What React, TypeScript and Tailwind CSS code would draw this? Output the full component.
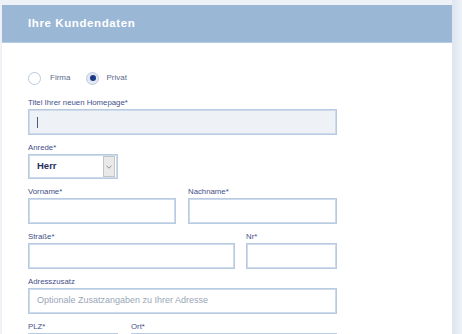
import React from "react";

const font = { fontFamily: '"Liberation Sans", Arial, sans-serif' };

function Label({ children, className = "" }: { children: React.ReactNode; className?: string }) {
  return (
    <div className={"h-[12px] flex items-end pb-[2px] text-[7.8px] leading-[8px] text-[#3f5088] " + className}>
      {children}
    </div>
  );
}

function Input({ className = "", children }: { className?: string; children?: React.ReactNode }) {
  return (
    <div
      className={
        "h-[26px] border-2 border-[#cddaeb] outline outline-1 outline-[#b9cbe1] -outline-offset-1 bg-white flex items-center " +
        className
      }
    >
      {children}
    </div>
  );
}

export default function App() {
  return (
    <div className="w-[462px] h-[334px] overflow-hidden bg-[#eef2f6] flex" style={font}>
      <div className="w-[2px] shrink-0" />
      <div className="w-[450px] shrink-0 mt-[5px] bg-white flex flex-col">
        <div className="h-[38px] shrink-0 bg-[#9bb7d6] border-b border-[#b7cce4] flex items-center pl-[26px]">
          <span className="text-white font-bold text-[11.5px] tracking-[0.6px]">Ihre Kundendaten</span>
        </div>
        <div className="pl-[26px] pt-[28px] w-[335px] flex flex-col">
          <div className="h-[14px] flex items-center text-[8px] text-[#5b6b8c]">
            <span className="w-[13px] h-[13px] rounded-full border border-[#bccadc] bg-white" />
            <span className="ml-[9px]">Firma</span>
            <span className="ml-[16px] w-[13px] h-[13px] rounded-full border border-[#bccadc] bg-[#e3eaf3] flex items-center justify-center">
              <span className="w-[6px] h-[6px] rounded-full bg-[#1c3a88]" />
            </span>
            <span className="ml-[7px]">Privat</span>
          </div>

          <div className="mt-[12px]">
            <Label>Titel Ihrer neuen Homepage*</Label>
            <Input className="!bg-[#eef2f7] pl-[7px]">
              <span className="w-[1px] h-[11px] bg-[#4a5a7a]" />
            </Input>
          </div>

          <div className="mt-[7px]">
            <Label>Anrede*</Label>
            <div className="w-[90px] h-[25px] border-2 border-[#cddaeb] outline outline-1 outline-[#b9cbe1] -outline-offset-1 bg-white flex items-center justify-between pl-[7px] pr-[1px]">
              <span className="text-[9.5px] font-bold text-[#1f2f5e]">Herr</span>
              <span className="w-[12px] h-[21px] bg-[#e9e9e9] border border-[#c6c6c6] flex items-center justify-center">
                <svg width="6" height="4" viewBox="0 0 6 4">
                  <path d="M0.5 0.8 L3 3.2 L5.5 0.8" fill="none" stroke="#8a8a8a" strokeWidth="0.9" />
                </svg>
              </span>
            </div>
          </div>

          <div className="mt-[7px] flex gap-[12px]">
            <div className="w-[148px]">
              <Label>Vorname*</Label>
              <Input />
            </div>
            <div className="w-[149px]">
              <Label>Nachname*</Label>
              <Input />
            </div>
          </div>

          <div className="mt-[7px] flex gap-[11px]">
            <div className="w-[207px]">
              <Label>Straße*</Label>
              <Input />
            </div>
            <div className="w-[91px]">
              <Label>Nr*</Label>
              <Input />
            </div>
          </div>

          <div className="mt-[7px]">
            <Label>Adresszusatz</Label>
            <Input className="pl-[7px] w-[309px]">
              <span className="text-[9px] text-[#9aa6b9]">Optionale Zusatzangaben zu Ihrer Adresse</span>
            </Input>
          </div>

          <div className="mt-[7px] flex gap-[13px]">
            <div className="w-[90px]">
              <Label>PLZ*</Label>
              <Input />
            </div>
            <div className="w-[206px]">
              <Label>Ort*</Label>
              <Input />
            </div>
          </div>
        </div>
      </div>
      <div className="w-[10px] shrink-0 bg-gradient-to-r from-[#dde5ef] to-[#eef2f7]" />
    </div>
  );
}
